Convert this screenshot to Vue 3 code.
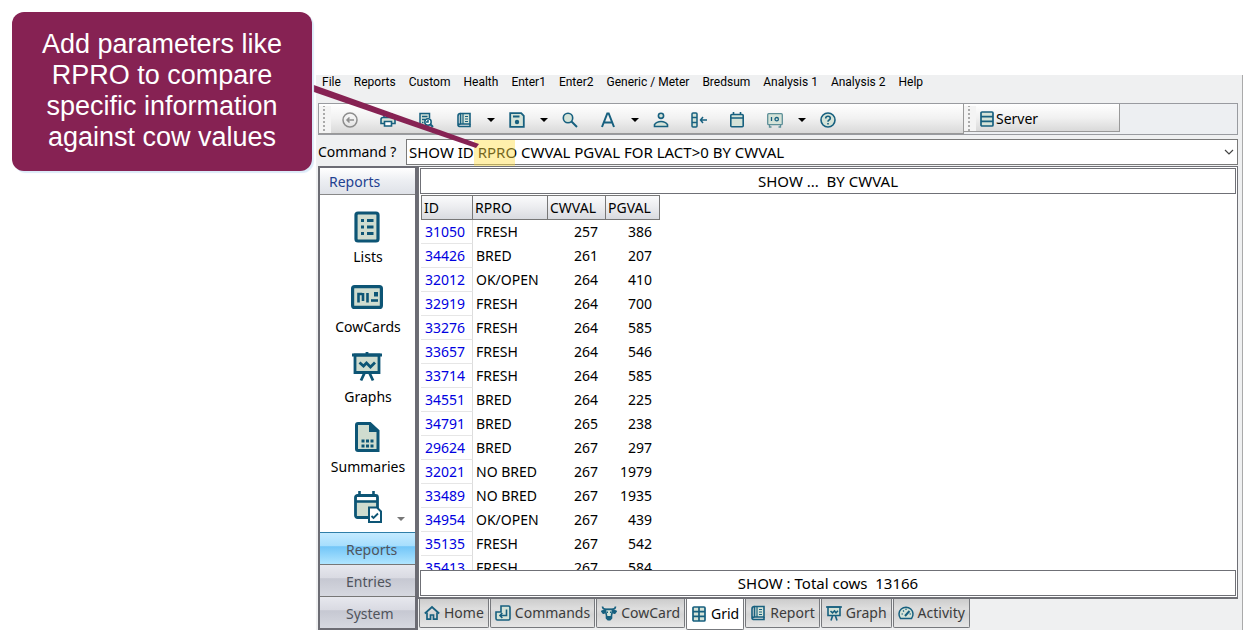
<script setup>
import { ref } from 'vue'

const menus = ['File', 'Reports', 'Custom', 'Health', 'Enter1', 'Enter2', 'Generic / Meter', 'Bredsum', 'Analysis 1', 'Analysis 2', 'Help']

const tools = [
  { icon: 'back', name: 'Back' },
  { icon: 'print', name: 'Print' },
  { icon: 'preview', name: 'Preview' },
  { icon: 'book', name: 'Report', drop: true },
  { icon: 'save', name: 'Save', drop: true },
  { icon: 'search', name: 'Search' },
  { icon: 'font', name: 'Font', drop: true },
  { icon: 'person', name: 'Person' },
  { icon: 'column', name: 'Columns' },
  { icon: 'calendar', name: 'Calendar' },
  { icon: 'safe', name: 'Backup', drop: true },
  { icon: 'help', name: 'Help' },
]

const shortcuts = [
  { icon: 'lists', label: 'Lists' },
  { icon: 'cards', label: 'CowCards' },
  { icon: 'graphs', label: 'Graphs' },
  { icon: 'summaries', label: 'Summaries' },
  { icon: 'events', label: 'Future Events' },
]

const groups = ['Reports', 'Entries', 'System']
const activeGroup = ref('Reports')

const tabs = [
  { icon: 'home', label: 'Home' },
  { icon: 'commands', label: 'Commands' },
  { icon: 'cow', label: 'CowCard' },
  { icon: 'grid', label: 'Grid' },
  { icon: 'book', label: 'Report' },
  { icon: 'board', label: 'Graph' },
  { icon: 'gauge', label: 'Activity' },
]
const activeTab = ref('Grid')

const command = ref('SHOW ID RPRO CWVAL PGVAL FOR LACT>0 BY CWVAL')

const rows = [
  [31050, 'FRESH', 257, 386],
  [34426, 'BRED', 261, 207],
  [32012, 'OK/OPEN', 264, 410],
  [32919, 'FRESH', 264, 700],
  [33276, 'FRESH', 264, 585],
  [33657, 'FRESH', 264, 546],
  [33714, 'FRESH', 264, 585],
  [34551, 'BRED', 264, 225],
  [34791, 'BRED', 265, 238],
  [29624, 'BRED', 267, 297],
  [32021, 'NO BRED', 267, 1979],
  [33489, 'NO BRED', 267, 1935],
  [34954, 'OK/OPEN', 267, 439],
  [35135, 'FRESH', 267, 542],
  [35413, 'FRESH', 267, 584],
]
</script>

<template>
  <div class="page">
    <svg class="defs" aria-hidden="true">
      <symbol id="i-back" viewBox="0 0 16 16"><g fill="none" stroke="#8d8d8d" stroke-width="1.5"><circle cx="8" cy="8" r="7" /><path d="M12 8H5M7.500 5.500L5 8l2.500 2.500" /></g></symbol>
      <symbol id="i-print" viewBox="0 0 16 16"><g fill="#d5e3d8" stroke="#17607f" stroke-width="1.600"><path d="M4 5V2h8v3" /><path d="M4 11.500H1V7.500Q1 5.500 3 5.500h10q2 0 2 2v4h-3" /><path d="M4.500 9.500h7v4.500h-7z" fill="#fff" /></g></symbol>
      <symbol id="i-preview" viewBox="0 0 16 16"><g fill="none" stroke="#17607f" stroke-width="1.500"><path d="M6 14H2V1.500h9.500V6" fill="#d5e3d8" /><path d="M4 4.500h5.500M4 7.500h3M4 10.500h1.500" /><circle cx="10" cy="10" r="3.200" fill="#fff" /><path d="M12.300 12.300L15 15" stroke-width="2" /><path d="M10 8v2H8" /></g></symbol>
      <symbol id="i-book" viewBox="0 0 16 16"><g fill="none" stroke="#17607f" stroke-width="1.600"><path d="M4.500 1.500H14v10.500H4.500z" fill="#d5e3d8" /><path d="M4.500 1.500Q2 1.500 2 4v9M4.500 12Q2 12 2 13.200T4.500 14.500H14V12" /><path d="M7 1.500V12M9 4.500h3M9 7h3M9 9.500h3" stroke-width="1.200" /></g></symbol>
      <symbol id="i-save" viewBox="0 0 16 16"><path d="M1.200 1.200h11l2.600 2.600v11H1.200z" fill="#d5e3d8" stroke="#17607f" stroke-width="1.800" /><path d="M4 4.500h6.500" stroke="#17607f" stroke-width="2" /><circle cx="8" cy="10" r="2.200" fill="#17607f" /></symbol>
      <symbol id="i-search" viewBox="0 0 16 16"><circle cx="6" cy="6" r="4.700" fill="#d5e3d8" stroke="#17607f" stroke-width="1.600" /><path d="M9.500 9.500L15 15" stroke="#17607f" stroke-width="2" /></symbol>
      <symbol id="i-font" viewBox="0 0 16 16"><path d="M2 15L7.300 1.500h1.400L14 15M4 10.500h8" fill="none" stroke="#17607f" stroke-width="2" /></symbol>
      <symbol id="i-person" viewBox="0 0 16 16"><g fill="#d5e3d8" stroke="#17607f" stroke-width="1.600"><circle cx="8" cy="3.800" r="2.600" /><path d="M1.500 14.500v-1.800Q3.500 9.500 8 9.500t6.500 3.200v1.800z" /></g></symbol>
      <symbol id="i-column" viewBox="0 0 16 16"><g fill="none" stroke="#17607f" stroke-width="1.500"><rect x="1" y="1" width="5" height="14" rx="1" fill="#d5e3d8" /><path d="M1 5.500h5M1 10.500h5M16 8H9.500M12 5L9.500 8l2.500 3" /></g></symbol>
      <symbol id="i-calendar" viewBox="0 0 16 16"><g fill="none" stroke="#17607f" stroke-width="1.600"><rect x="1.800" y="2.500" width="12.400" height="12.300" rx="1" fill="#d5e3d8" /><path d="M1.800 6h12.400M4.500 0v3M11.500 0v3" /></g></symbol>
      <symbol id="i-safe" viewBox="0 0 16 16"><g fill="none" stroke="#5d8f98" stroke-width="1.300"><rect x=".7" y="1.700" width="14.600" height="11" rx="1" fill="#d5e3d8" /><path d="M2.500 13v2h2M13.500 13v2h-2" /><path d="M4.500 5v4" stroke="#17607f" /><circle cx="9.700" cy="7.200" r="1.700" stroke="#17607f" /></g></symbol>
      <symbol id="i-help" viewBox="0 0 16 16"><g fill="none" stroke="#17607f" stroke-width="1.600"><circle cx="8" cy="8" r="7" fill="#d5e3d8" /><path d="M5.700 6.500Q5.700 4.300 8 4.300t2.300 1.900Q10.300 7.300 9 8 8 8.500 8 9.800M8 11v1.600" /></g></symbol>
      <symbol id="i-server" viewBox="0 0 16 16"><g fill="#d5e3d8" stroke="#17607f" stroke-width="1.700"><rect x="2" y="1" width="12" height="14" rx="1" /><path d="M2 5.700h12M2 10.300h12" /></g></symbol>
      <symbol id="i-home" viewBox="0 0 16 16"><g fill="none" stroke="#17607f" stroke-width="1.700"><path d="M.8 8.500L8 2l7.200 6.500" /><path d="M3 7.500V14.200h3.500V10h3v4.200H13V7.500" /></g></symbol>
      <symbol id="i-commands" viewBox="0 0 16 16"><g fill="none" stroke="#17607f" stroke-width="1.600"><path d="M6 1h7.500Q15 1 15 2.500v11q0 1.500-1.500 1.500h-11Q1 15 1 13.500V7h5z" fill="#d5e3d8" /><path d="M11.500 4.500v6H5M7.300 8L5 10.500l2.300 2.500" /></g></symbol>
      <symbol id="i-cow" viewBox="0 0 16 16"><g stroke="#17607f" stroke-width="1.600" stroke-linejoin="round"><path d="M1.500 1.500Q1.500 4.200 5 4.200h6q3.500 0 3.500-2.700" fill="none" /><path d="M4.200 5L.8 6.200l1.500 2 2.200-.7M11.800 5l3.400 1.200-1.500 2-2.200-.7" fill="#17607f" /><path d="M4.300 4.500h7.400l-1.200 6v2.800L9 14.800H7L5.500 13.300v-2.800z" fill="#d5e3d8" /></g><path d="M5.700 11h4.600v2L9 14.500H7L5.700 13z" fill="#17607f" /><path d="M6.500 6.500v1.500M9.500 6.500v1.500" stroke="#17607f" /></symbol>
      <symbol id="i-grid" viewBox="0 0 16 16"><g fill="#d5e3d8" stroke="#17607f" stroke-width="1.700"><rect x="2" y="1" width="12" height="14" rx="1" /><path d="M2 5.700h12M2 10.300h12M8 1v14" /></g></symbol>
      <symbol id="i-board" viewBox="0 0 16 16"><g fill="none" stroke="#17607f" stroke-width="1.600"><path d="M2 2h12v8.500H2z" fill="#d5e3d8" /><path d="M0 2h16M6.500 11L5 15.500M9.500 11l1.500 4.500M4.500 6l2 1.800L8.500 6l1.500 1.800 2-2" /></g></symbol>
      <symbol id="i-gauge" viewBox="0 0 16 16"><g fill="none" stroke="#17607f" stroke-width="1.500"><path d="M2.500 13.500A7 7 0 1 1 13.500 13.500z" fill="#d5e3d8" /><path d="M3.500 9h1.500M5 5.500l1 1M8 3.500V5M11.500 9H13" stroke-width="1.200" /><path d="M7 11l4.500-5" stroke-width="2" /></g></symbol>
      <symbol id="i-lists" viewBox="0 0 32 32"><rect x="5" y="2" width="22" height="28" rx="2" fill="#cfdccf" stroke="#0d5575" stroke-width="3.200" /><path d="M10 9.500h3M16 9.500h6.500M10 16h3M16 16h6.500M10 22.500h3M16 22.500h6.500" stroke="#0d5575" stroke-width="2.800" /></symbol>
      <symbol id="i-cards" viewBox="0 0 32 32"><rect x="1.600" y="5.600" width="28.800" height="20.800" rx="2" fill="#cfdccf" stroke="#0d5575" stroke-width="3.200" /><path d="M7.500 12v9.500M12 12v8M16.500 12v9.500M6.200 13h5" stroke="#0d5575" stroke-width="2.600" /><path d="M20 19.500h7" stroke="#0d5575" stroke-width="2.600" /><path d="M23 11h4v4.500h-4z" fill="#0d5575" /></symbol>
      <symbol id="i-graphs" viewBox="0 0 32 32"><g fill="none" stroke="#0d5575" stroke-width="2.800"><path d="M4 4h24v17.500H4z" fill="#cfdccf" /><path d="M1 4h30M16 1v3M13.500 22l-3.500 7.500M18.500 22l3.500 7.500" /><path d="M8.500 11.500l4 3.500 3-3 4 4 4.500-4.500" /></g></symbol>
      <symbol id="i-summaries" viewBox="0 0 32 32"><path d="M7 2.500h12L27 10v19.500H7Q5.500 29.500 5.500 28V4Q5.500 2.500 7 2.500z" fill="#cfdccf" stroke="#0d5575" stroke-width="3" /><path d="M18 2v9h9z" fill="#0d5575" /><path d="M10.500 20h3M15 20h3M19.500 20h3M10.500 25h3M15 25h3M19.500 25h3" stroke="#0d5575" stroke-width="3" /></symbol>
      <symbol id="i-events" viewBox="0 0 32 32"><rect x="4.500" y="4.500" width="22" height="22" rx="2" fill="#cfdccf" stroke="#0d5575" stroke-width="2.800" /><path d="M6 6h19v3.500H6z" fill="#fff" /><path d="M4.500 10.500h22M8.500 0v5M22.500 0v5" stroke="#0d5575" stroke-width="2.600" /><path d="M18 16.500h8l4 4V31H18z" fill="#fff" stroke="#0d5575" stroke-width="2" /><path d="M20.500 25l2 2 4.500-4.500" fill="none" stroke="#0d5575" stroke-width="1.800" /></symbol>
    </svg>

    <main class="window">
      <nav class="menubar">
        <button v-for="m in menus" :key="m" class="menu">{{ m }}</button>
      </nav>

      <div class="toolbars">
        <div class="toolbar main-tools">
          <span class="grip"></span>
          <template v-for="t in tools" :key="t.icon">
            <button class="tool" :aria-label="t.name"><svg class="icon"><use :href="'#i-' + t.icon" /></svg></button>
            <button v-if="t.drop" class="drop" :aria-label="t.name + ' options'"><span class="arrow"></span></button>
          </template>
        </div>
        <div class="toolbar server-tools">
          <span class="grip"></span>
          <button class="server"><svg class="icon"><use href="#i-server" /></svg>Server</button>
        </div>
      </div>

      <div class="command">
        <label for="command">Command ?</label>
        <div class="combo">
          <input id="command" v-model="command" type="text" spellcheck="false" />
          <button class="combo-open" aria-label="Command history">
            <svg class="chevron" viewBox="0 0 10 6"><path d="M1 1l4 4 4-4" fill="none" stroke="#444" stroke-width="1.200" /></svg>
          </button>
          <span class="highlight"></span>
        </div>
      </div>

      <div class="body">
        <aside class="sidebar">
          <h2>Reports</h2>
          <div class="shortcuts">
            <button v-for="s in shortcuts" :key="s.icon" class="shortcut">
              <svg class="big-icon"><use :href="'#i-' + s.icon" /></svg>
              <span>{{ s.label }}</span>
            </button>
            <span class="more"></span>
          </div>
          <button v-for="g in groups" :key="g" class="group" :class="{ active: g === activeGroup }" @click="activeGroup = g">{{ g }}</button>
        </aside>

        <div class="content">
          <section class="report">
            <div class="band">SHOW ...&nbsp; BY CWVAL</div>
            <div class="sheet">
              <table>
                <thead>
                  <tr><th class="c-id">ID</th><th class="c-rpro">RPRO</th><th class="c-cw">CWVAL</th><th class="c-pg">PGVAL</th></tr>
                </thead>
                <tbody>
                  <tr v-for="r in rows" :key="r[0]">
                    <td class="id">{{ r[0] }}</td><td>{{ r[1] }}</td><td class="num">{{ r[2] }}</td><td class="num">{{ r[3] }}</td>
                  </tr>
                </tbody>
              </table>
            </div>
            <div class="band">SHOW : Total cows&nbsp; 13166</div>
          </section>
          <nav class="tabs">
            <button v-for="t in tabs" :key="t.label" class="tab" :class="{ active: t.label === activeTab }" @click="activeTab = t.label">
              <svg class="icon"><use :href="'#i-' + t.icon" /></svg>{{ t.label }}
            </button>
          </nav>
        </div>
      </div>
    </main>

    <svg class="pointer" viewBox="0 0 170 68" aria-hidden="true"><path d="M0 2L0 9L165 66L168 62Z" fill="#862253" /></svg>
    <aside class="callout">Add parameters like RPRO to compare specific information against cow values</aside>
  </div>
</template>

<style>
html, body { background: #fff; }
</style>

<style scoped>
* { box-sizing: border-box; }
.page {
  position: relative;
  height: 100vh;
  padding: 75px 0 0 316px;
  overflow: hidden;
  font-family: "Noto Sans", "Open Sans", sans-serif;
  font-size: 14px;
  line-height: 20px;
  color: #000;
}
button { margin: 0; padding: 0; border: 0; background: none; font: inherit; color: inherit; }
.defs { position: absolute; width: 0; height: 0; }
.window {
  display: flex;
  flex-direction: column;
  height: 100%;
  padding: 0 4px 0 2px;
  background: #eff0f1;
  border-right: 1px solid #aaa;
}
.menubar { display: flex; gap: 13px; padding: 0 4px; height: 28px; font: 12px/14px Roboto, "Open Sans", sans-serif; }
.menu { height: 14px; white-space: nowrap; }
.toolbars { display: flex; align-items: flex-start; height: 32px; border: 1px solid #999ba0; background: #edeff2; }
.toolbar { display: flex; align-items: stretch; padding-top: 2px; border-right: 1px solid #999; border-bottom: 1px solid #999; background: linear-gradient(#fff, #f1f1f1 50%, #d9d9d9); }
.main-tools { flex: 0 0 645px; height: 30px; }
.server-tools { flex: 0 0 156px; height: 28px; }
.grip { width: 12px; background: radial-gradient(circle, #aaa 1px, transparent 1px) 3px 2px / 4px 4px repeat-y #f4f4f4; }
.tool, .drop, .combo-open { display: flex; align-items: center; justify-content: center; }
.tool { width: 38px; }
.drop { width: 15px; }
.arrow { border: 4px solid transparent; border-top-color: #000; border-bottom: 0; }
.icon { width: 16px; height: 16px; flex: none; }
.server { display: flex; align-items: center; gap: 1px; padding-left: 3px; }
.command { display: flex; align-items: center; height: 31px; padding-top: 2px; }
.command label { width: 88px; }
.combo { position: relative; display: flex; flex: 1; height: 26px; border: 1px solid #7a7a7a; background: #fff; font-size: 15px; }
.combo input { flex: 1; min-width: 0; padding: 0 2px; border: 0; outline: 0; background: none; font: inherit; color: inherit; }
.combo-open { width: 16px; }
.chevron { width: 10px; height: 6px; }
.highlight { position: absolute; left: 67px; top: 0; width: 41px; height: 26px; background: rgba(255, 221, 70, 0.45); pointer-events: none; }
.body { display: flex; flex: 1; min-height: 0; }
.sidebar { display: flex; flex-direction: column; flex: 0 0 100px; border: 2px solid #6c6c74; border-right-width: 3px; background: #fff; }
h2 { flex: none; margin: 0; height: 27px; padding: 0 9px; border-bottom: 1px solid #888; background: linear-gradient(#fff, #eceef2 50%, #dfe2e8); font-size: 14px; font-weight: 400; line-height: 28px; color: #1f4191; }
.shortcuts { position: relative; display: flex; flex-direction: column; flex: 1; min-height: 0; padding-top: 16px; overflow: hidden; }
.shortcut { display: flex; flex-direction: column; align-items: center; flex: 0 0 70px; gap: 4px; padding-left: 1px; white-space: nowrap; }
.big-icon { width: 32px; height: 32px; flex: none; margin-right: 2px; }
.more { position: absolute; right: 10px; bottom: 11px; border: 4px solid transparent; border-top-color: #777; border-bottom: 0; }
.group { flex: 0 0 32px; padding: 2px 0 0 26px; border-top: 1px solid #777; background: linear-gradient(#e7e8ee, #d9dae2 42%, #c6c8d2 44%, #d6d8e0); color: #50545c; text-align: left; }
.group.active { border-top-color: #2e7ea8; background: linear-gradient(#c4eaff, #a6defd 42%, #73c6f8 44%, #b0e5ff); }
.content { display: flex; flex-direction: column; flex: 1; min-width: 0; }
.report { display: flex; flex-direction: column; flex: 1; min-height: 0; padding: 1px; border: 1px solid #6f7076; border-bottom-width: 2px; background: #fff; }
.band { flex: none; height: 26px; border: 1px solid #6f7076; font-size: 15px; line-height: 25px; text-align: center; }
.sheet { flex: 1; min-height: 0; padding: 1px 0 0 1px; overflow: hidden; }
table { width: 239px; border-collapse: separate; border-spacing: 0; table-layout: fixed; }
th { height: 25px; padding: 0 2px; border: 1px solid #777; border-left: 0; background: linear-gradient(#fbfbfc, #ebecef 50%, #d9dbe0); font-weight: 400; text-align: left; line-height: 23px; }
th:first-child { border-left: 1px solid #777; }
.c-id { width: 52px; }
.c-rpro { width: 75px; }
.c-cw { width: 58px; }
.c-pg { width: 54px; }
td { height: 24px; padding: 0 3px; line-height: 24px; white-space: nowrap; }
.id { padding-left: 4px; border-right: 1px solid #ddd; border-bottom: 1px solid #e6e6e6; line-height: 23px; color: #0000e0; }
.num { padding-right: 8px; text-align: right; }
.tabs { display: flex; align-items: flex-start; gap: 1px; flex: 0 0 31px; padding-left: 1px; }
.tab { display: flex; align-items: center; gap: 4px; height: 29px; padding: 0 4px; border: 1px solid #77797d; border-top: 0; border-radius: 0 0 2px 2px; background: linear-gradient(#ccc, #dedede 35%, #d4d4d4 55%, #e6e6e6); color: #3c3c3c; }
.tab.active { height: 31px; background: #fff; color: #000; }
.callout {
  position: absolute;
  left: 12px;
  top: 12px;
  width: 300px;
  padding: 17px 28px 18px;
  border-radius: 12px;
  background: #862253;
  box-shadow: 2px 2px 1px #dcebf9;
  font: 27px/31px "Liberation Sans", Arial, sans-serif;
  color: #fff;
  text-align: center;
}
.pointer { position: absolute; left: 311px; top: 82px; width: 170px; height: 68px; }
</style>
